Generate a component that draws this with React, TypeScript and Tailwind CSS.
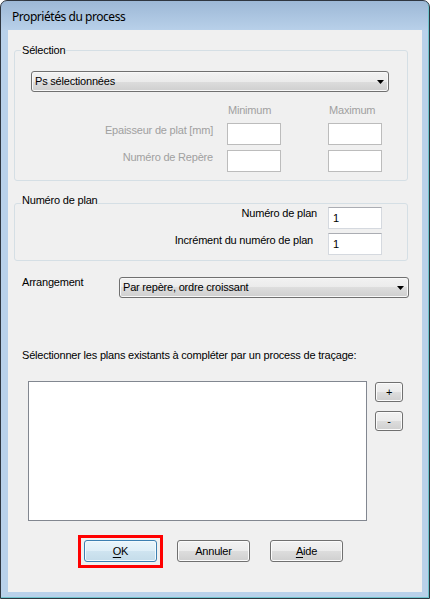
const ui = "font-['Liberation_Sans',Arial,sans-serif] text-[11px] leading-[13px] tracking-[-0.2px]";

const combo =
  "flex items-center justify-between rounded-[3px] border border-[#707070] bg-[linear-gradient(#f2f2f2,#ebebeb_50%,#dddddd_50%,#cfcfcf)] pl-[3px] pr-[4px] shadow-[inset_0_0_0_1px_#f8f8f8]";

const button =
  "flex items-center justify-center rounded-[3px] border border-[#707070] bg-[linear-gradient(#f2f2f2,#ebebeb_50%,#dddddd_50%,#cfcfcf)] shadow-[inset_0_0_0_1px_#fbfbfb]";

const disabledBox = "h-[22px] w-[54px] border border-[#bcbcbc] bg-white";

const inputBox =
  "flex h-[22px] w-[54px] items-center border border-[#d5d9df] border-t-[#abadb3] bg-white pl-[4px]";

function Arrow() {
  return (
    <svg width="7" height="4" viewBox="0 0 7 4">
      <path d="M0 0H7L3.5 4Z" fill="#000" />
    </svg>
  );
}

function Group({
  label,
  labelTop,
  className,
  children,
}: {
  label: string;
  labelTop: string;
  className: string;
  children: React.ReactNode;
}) {
  return (
    <div className={`relative ml-[6px] w-[394px] rounded-[3px] border border-[#d5dfe5] ${className}`}>
      <span className={`absolute left-[6px] bg-[#f0f0f0] px-[1px] ${labelTop}`}>{label}</span>
      {children}
    </div>
  );
}

export default function App() {
  return (
    <div className="h-[599px] w-[430px] overflow-hidden bg-white">
      <div className="flex h-full flex-col rounded-t-[7px] border border-[#2f3640] bg-[linear-gradient(#9db8d6,#b9d1ea_30px,#b9d1ea)] shadow-[inset_-1px_-1px_0_#6fc3cc]">
        <div className="h-[29px] shrink-0 pl-[11px] pt-[8px] font-['Noto_Sans',sans-serif] text-[12px] leading-[16px] tracking-[-0.45px] text-black">
          Propriétés du process
        </div>

        <div className={`mx-[7px] flex h-[562px] shrink-0 flex-col bg-[#f0f0f0] text-black ${ui}`}>
          <Group label="Sélection" labelTop="top-[-7px]" className="mt-[20px] pb-[8px]">
            <div className={`${combo} ml-[16px] mt-[20px] h-[21px] w-[358px]`}>
              <span>Ps sélectionnées</span>
              <Arrow />
            </div>

            <div className="mt-[12px] flex h-[13px] text-[#a0a0a0]">
              <span className="ml-[213px] w-[101px]">Minimum</span>
              <span>Maximum</span>
            </div>

            <div className="mt-[6px] flex text-[#a0a0a0]">
              <div className="w-[198px] pt-[1px] text-right">Epaisseur de plat [mm]</div>
              <div className={`${disabledBox} ml-[14px]`} />
              <div className={`${disabledBox} ml-[47px]`} />
            </div>
            <div className="mt-[5px] flex text-[#a0a0a0]">
              <div className="w-[198px] pt-[1px] text-right">Numéro de Repère</div>
              <div className={`${disabledBox} ml-[14px]`} />
              <div className={`${disabledBox} ml-[47px]`} />
            </div>
          </Group>

          <Group label="Numéro de plan" labelTop="top-[-10px]" className="mt-[22px] pb-[5px] pt-[3px]">
            <div className="flex">
              <div className="w-[302px] text-right">Numéro de plan</div>
              <div className={`${inputBox} ml-[11px]`}>1</div>
            </div>
            <div className="mt-[4px] flex">
              <div className="w-[298px] pt-[1px] text-right">Incrément du numéro de plan</div>
              <div className={`${inputBox} ml-[15px]`}>1</div>
            </div>
          </Group>

          <div className="ml-[14px] mt-[16px] flex items-start">
            <span className="-mt-[1px] w-[97px]">Arrangement</span>
            <div className={`${combo} h-[21px] w-[290px]`}>
              <span>Par repère, ordre croissant</span>
              <Arrow />
            </div>
          </div>

          <div className="ml-[14px] mt-[51px]">
            Sélectionner les plans existants à compléter par un process de traçage:
          </div>

          <div className="ml-[20px] mt-[19px] flex items-start">
            <div className="h-[140px] w-[339px] border border-[#828790] bg-white" />
            <div className="ml-[8px] mt-[1px] flex flex-col">
              <button className={`${button} h-[20px] w-[28px]`}>+</button>
              <button className={`${button} mt-[9px] h-[20px] w-[28px]`}>-</button>
            </div>
          </div>

          <div className="ml-[70px] mt-[14px] flex items-start">
            <div className="border-[3px] border-[#ff0000] px-[3px] pb-[3px] pt-[2px]">
              <button className="flex h-[22px] w-[73px] items-center justify-center rounded-[3px] border border-[#3c7fb1] bg-[linear-gradient(#eaf5fb,#deeef7_50%,#cfe4f0_50%,#c4dcea)] shadow-[inset_0_0_0_1px_#f2fafe]">
                <span className="underline underline-offset-[2px]">O</span>K
              </button>
            </div>
            <button className={`${button} ml-[14px] mt-[5px] h-[22px] w-[73px]`}>Annuler</button>
            <button className={`${button} ml-[20px] mt-[5px] h-[22px] w-[73px]`}>
              <span className="underline underline-offset-[2px]">A</span>ide
            </button>
          </div>
        </div>
      </div>
    </div>
  );
}
